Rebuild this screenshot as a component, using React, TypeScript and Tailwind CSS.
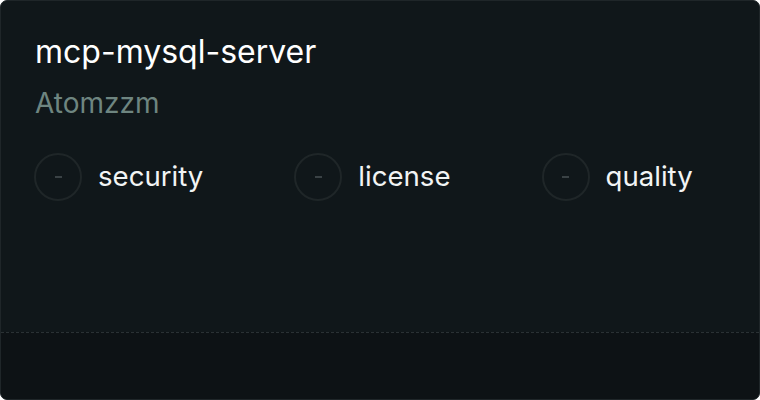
import React from "react";

function Item({ label }: { label: string }) {
  return (
    <div className="flex items-center gap-4">
      <div className="w-12 h-12 rounded-full border-2 border-[#1f2628] flex items-center justify-center">
        <span className="block w-[7px] h-[2px] bg-[#3a4245]" />
      </div>
      <span className="text-[27.6px] text-[#f2f4f4] leading-none -mt-[1px]">{label}</span>
    </div>
  );
}

export default function App() {
  return (
    <div className="w-[760px] h-[400px] bg-white" style={{ fontFamily: "Inter, 'Noto Sans', sans-serif" }}>
      <div className="w-full h-full rounded-[7px] border border-[#1f2629] bg-[#10171a] flex flex-col overflow-hidden">
        <div className="flex-1 pl-[33px] pt-[35px]">
          <div className="pl-[1px] text-[32px] leading-none text-white">mcp-mysql-server</div>
          <div className="pl-[1px] mt-[21px] text-[28px] leading-none text-[#6e8580]">Atomzzm</div>
          <div className="mt-[36px] flex gap-[91px]">
            <Item label="security" />
            <Item label="license" />
            <Item label="quality" />
          </div>
        </div>
        <div className="h-[67px] border-t border-dashed border-[#2a3134] bg-[#0d1215]" />
      </div>
    </div>
  );
}
